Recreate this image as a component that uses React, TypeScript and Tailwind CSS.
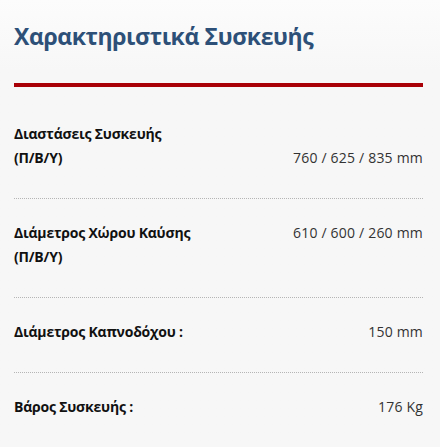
import React from "react";

type Spec = {
  label: string[];
  value: string;
  align: "start" | "end";
};

const specs: Spec[] = [
  { label: ["Διαστάσεις Συσκευής", "(Π/Β/Υ)"], value: "760 / 625 / 835 mm", align: "end" },
  { label: ["Διάμετρος Χώρου Καύσης", "(Π/Β/Υ)"], value: "610 / 600 / 260 mm", align: "start" },
  { label: ["Διάμετρος Καπνοδόχου :"], value: "150 mm", align: "start" },
  { label: ["Βάρος Συσκευής :"], value: "176 Kg", align: "start" },
];

const App: React.FC = () => {
  return (
    <div
      className="min-h-[447px] w-[440px] bg-gradient-to-b from-[#fcfcfc] to-[#f7f7f7] to-[70px] pl-[14px] pr-[17px] pt-[20px]"
      style={{ fontFamily: '"Open Sans", "Noto Sans", sans-serif' }}
    >
      {/* Heading */}
      <h2 className="text-[23px] leading-[32px] font-bold tracking-[-0.4px] text-[#2d5078]">
        Χαρακτηριστικά Συσκευής
      </h2>
      <div className="mt-[31px] h-[4px] bg-[#a90007]" />

      {/* Spec rows */}
      <div className="pt-[13px]">
        {specs.map((s, i) => (
          <div
            key={i}
            className={
              "flex justify-between pt-[22px] pb-[28px] text-[14px] leading-[24px] " +
              (i < specs.length - 1 ? "border-b border-dotted border-[#b5b5b5]" : "")
            }
          >
            <div className="font-bold tracking-[-0.2px] text-[#111]">
              {s.label.map((l, j) => (
                <div key={j}>{l}</div>
              ))}
            </div>
            <div
              className={
                "text-[#333] tracking-[0.2px] " + (s.align === "end" ? "self-end" : "self-start")
              }
            >
              {s.value}
            </div>
          </div>
        ))}
      </div>
    </div>
  );
};

export default App;
